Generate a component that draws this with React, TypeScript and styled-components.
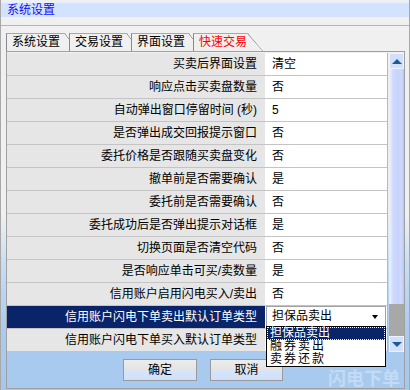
import React from 'react';
import styled, { createGlobalStyle } from 'styled-components';

const GlobalStyle = createGlobalStyle`
  html, body { margin: 0; padding: 0; }
  body {
    font-family: "Liberation Sans", "Noto Sans CJK SC", sans-serif;
    font-size: 12px;
  }
`;

const Window = styled.div`
  width: 410px;
  height: 390px;
  box-sizing: border-box;
  border-left: 1px solid #a8a8a8;
  border-right: 1px solid #a8a8a8;
  background: linear-gradient(180deg, #f0f0f0 0, #f0f0f0 215px, #c6ddf5 265px, #aacbee 330px, #a6c8ee 100%);
  display: flex;
  flex-direction: column;
  overflow: hidden;
`;

const TitleBar = styled.div`
  margin-top: 1px;
  height: 14px;
  border-top: 2px solid #e6f1ff;
  background: #d3e2fd;
  color: #1010f8;
  line-height: 14px;
  padding-left: 6px;
`;

const Divider = styled.div`
  margin-top: 8px;
  height: 1px;
  background: #b4b4b4;
`;

const TabStrip = styled.div`
  margin-top: 7px;
  height: 18px;
  padding-left: 5px;
  display: flex;
`;

const Tab = styled.div<{ $w: number; $active?: boolean }>`
  position: relative;
  width: ${p => p.$w}px;
  box-sizing: border-box;
  border-left: 1px solid #8a8a8a;
  border-top: 1px solid #a8a8a8;
  padding-left: 5px;
  line-height: 17px;
  color: ${p => (p.$active ? '#ff0000' : '#000')};
  clip-path: ${p =>
    p.$active
      ? 'polygon(0 0, calc(100% - 15px) 0, 100% 100%, 0 100%)'
      : 'polygon(0 0, calc(100% - 4px) 0, 100% 5px, 100% 100%, 0 100%)'};

  &::after {
    content: '';
    position: absolute;
    right: 0;
    top: 0;
    width: ${p => (p.$active ? 15 : 4)}px;
    height: ${p => (p.$active ? 17 : 5)}px;
    background: linear-gradient(to top right, transparent calc(50% - 0.7px), #8a8a8a 50%, transparent calc(50% + 0.7px));
  }
`;

const Page = styled.div`
  margin-left: 5px;
  width: 399px;
  box-sizing: border-box;
  border: 1px solid #a0a0a0;
  padding-top: 1px;
  display: flex;
  flex-direction: column;
`;

const Grid = styled.div`
  display: flex;
  gap: 1px;
`;

const Table = styled.div`
  width: 381px;
  box-sizing: border-box;
  border-right: 1px solid #b8b8b8;
  background: #fff;
`;

const Row = styled.div`
  display: flex;
  height: 22px;
  border-bottom: 1px solid #c4c4c4;
`;

const Label = styled.div<{ $selected?: boolean }>`
  width: 259px;
  border-right: 1px solid #fff;
  background: ${p => (p.$selected ? '#0a246a' : '#e6e6e6')};
  color: ${p => (p.$selected ? '#fff' : '#000')};
  text-align: right;
  padding-right: 8px;
  box-sizing: border-box;
  line-height: 22px;
  white-space: nowrap;
`;

const Value = styled.div<{ $combo?: boolean }>`
  width: 120px;
  background: #fff;
  padding-left: ${p => (p.$combo ? 0 : 6)}px;
  box-sizing: border-box;
  line-height: 22px;
  position: relative;
`;

const Combo = styled.div`
  position: relative;
  width: 120px;
  height: 21px;
  box-sizing: border-box;
  border: 1px solid #a0a0a0;
  background: #fff;
  padding-left: 5px;
  line-height: 19px;
`;

const ComboArrow = styled.span`
  position: absolute;
  right: 7px;
  top: 8px;
  width: 0;
  height: 0;
  border-left: 3px solid transparent;
  border-right: 3px solid transparent;
  border-top: 4px solid #000;
`;

const DropList = styled.div`
  position: absolute;
  left: 0;
  top: 20px;
  width: 120px;
  box-sizing: border-box;
  border: 1px solid #000;
  background: #fff;
  z-index: 5;
`;

const DropItem = styled.div<{ $active?: boolean; $spaced?: boolean }>`
  height: 13px;
  line-height: 13px;
  padding-left: 3px;
  letter-spacing: ${p => (p.$spaced ? '2px' : '0')};
  background: ${p => (p.$active ? '#0a246a' : 'transparent')};
  color: ${p => (p.$active ? '#fff' : '#000')};
  outline: ${p => (p.$active ? '1px dotted #fff' : 'none')};
  outline-offset: -1px;
  white-space: nowrap;
`;

const ScrollBar = styled.div`
  width: 15px;
  display: flex;
  flex-direction: column;
`;

const ScrollBtn = styled.div<{ $down?: boolean }>`
  height: 16px;
  box-sizing: border-box;
  border: 1px solid #eef4ff;
  background: #d2e0fc;
  display: flex;
  align-items: center;
  justify-content: center;

  &::before {
    content: '';
    width: 0;
    height: 0;
    border-left: 5px solid transparent;
    border-right: 5px solid transparent;
    ${p => (p.$down ? 'border-top: 5px solid #1a5c98;' : 'border-bottom: 5px solid #1a5c98;')}
  }
`;

const Track = styled.div`
  flex: 1;
  display: flex;
  flex-direction: column;
  justify-content: flex-end;
  background: linear-gradient(90deg, #e4edfd 0, #e4edfd 2px, #d2defc 3px, #c6d2fc 9px, #cfdafc 12px, #b8c8f4 15px);
`;

const Thumb = styled.div`
  height: 32px;
  background: #a8a8a8;
`;

const ButtonBar = styled.div`
  position: relative;
  height: 36px;
  box-sizing: border-box;
  padding: 7px 0 0 116px;
  display: flex;
  gap: 13px;
  align-items: flex-start;
  background: #a8caee;
`;

const Button = styled.div<{ $w: number }>`
  width: ${p => p.$w}px;
  height: 22px;
  box-sizing: border-box;
  border: 1px solid #9a9a9a;
  background: linear-gradient(180deg, #ececec 0, #e4e4e4 50%, #d6e4fb 55%, #d0e0fc 100%);
  text-align: center;
  line-height: 20px;
  position: relative;
  z-index: 1;
`;

const Watermark = styled.span`
  position: absolute;
  right: 4px;
  bottom: 1px;
  font-family: "Noto Sans CJK SC", sans-serif;
  font-size: 18px;
  line-height: 19px;
  font-weight: bold;
  color: rgba(220, 234, 250, 0.55);
`;

const rows: [string, string][] = [
  ['买卖后界面设置', '清空'],
  ['响应点击买卖盘数量', '否'],
  ['自动弹出窗口停留时间 (秒)', '5'],
  ['是否弹出成交回报提示窗口', '否'],
  ['委托价格是否跟随买卖盘变化', '否'],
  ['撤单前是否需要确认', '是'],
  ['委托前是否需要确认', '否'],
  ['委托成功后是否弹出提示对话框', '是'],
  ['切换页面是否清空代码', '否'],
  ['是否响应单击可买/卖数量', '是'],
  ['信用账户启用闪电买入/卖出', '否'],
  ['信用账户闪电下单卖出默认订单类型', ''],
  ['信用账户闪电下单买入默认订单类型', ''],
];

const SELECTED = 11;

export default function App() {
  return (
    <>
      <GlobalStyle />
      <Window>
        <TitleBar>系统设置</TitleBar>
        <Divider />
        <TabStrip>
          <Tab $w={63}>系统设置</Tab>
          <Tab $w={62}>交易设置</Tab>
          <Tab $w={62}>界面设置</Tab>
          <Tab $w={70} $active>快速交易</Tab>
        </TabStrip>
        <Page>
          <Grid>
            <Table>
              {rows.map(([label, value], i) => (
                <Row key={i}>
                  <Label $selected={i === SELECTED}>{label}</Label>
                  {i === SELECTED ? (
                    <Value $combo>
                      <Combo>
                        担保品卖出
                        <ComboArrow />
                      </Combo>
                      <DropList>
                        <DropItem $active>担保品卖出</DropItem>
                        <DropItem $spaced>融券卖出</DropItem>
                        <DropItem $spaced>卖券还款</DropItem>
                      </DropList>
                    </Value>
                  ) : (
                    <Value>{value}</Value>
                  )}
                </Row>
              ))}
            </Table>
            <ScrollBar>
              <ScrollBtn />
              <Track>
                <Thumb />
              </Track>
              <ScrollBtn $down />
            </ScrollBar>
          </Grid>
          <ButtonBar>
            <Button $w={74}>确定</Button>
            <Button $w={73}>取消</Button>
            <Watermark>闪电下单</Watermark>
          </ButtonBar>
        </Page>
      </Window>
    </>
  );
}
